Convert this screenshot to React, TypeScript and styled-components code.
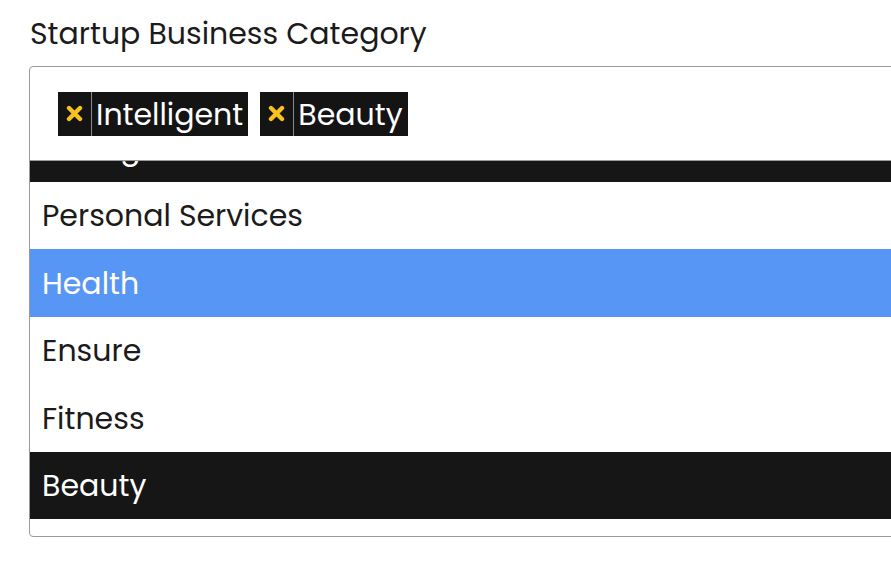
import { useEffect, useRef } from 'react'
import styled, { createGlobalStyle } from 'styled-components'

const GlobalStyle = createGlobalStyle`
  html, body {
    margin: 0;
    padding: 0;
    background: #ffffff;
    overflow: hidden;
  }
  body {
    font-family: 'Poppins', 'Open Sans', 'DejaVu Sans', sans-serif;
    color: #1b1b1b;
  }
`

const Page = styled.div`
  padding: 14px 0 0 29px;
`

const Label = styled.div`
  font-size: 30px;
  line-height: 40px;
  color: #1b1b1b;
  margin-bottom: 12px;
  padding-left: 1px;
`

const SelectBox = styled.div`
  width: 960px;
  border: 1px solid #9a9a9a;
  border-radius: 4px;
  overflow: hidden;
  background: #ffffff;
`

const TagArea = styled.div`
  height: 93px;
  display: flex;
  align-items: center;
  gap: 12px;
  padding-left: 28px;
  border-bottom: 1px solid #9a9a9a;
`

const Tag = styled.div`
  display: flex;
  align-items: stretch;
  height: 44px;
  background: #141414;
  color: #ffffff;
`

const TagRemove = styled.span`
  width: 33px;
  display: flex;
  align-items: center;
  justify-content: center;
  border-right: 1px solid #8a8a8a;
`

const TagText = styled.span`
  display: flex;
  align-items: center;
  padding: 2px 5px 0 4px;
  font-size: 30px;
`

const List = styled.div`
  height: 375px;
  overflow: hidden;
`

const Option = styled.div<{ state?: 'selected' | 'active' }>`
  height: 67.5px;
  display: flex;
  align-items: center;
  padding: 2px 12px 0;
  box-sizing: border-box;
  font-size: 30px;
  background: ${p => p.state === 'selected' ? '#161616' : p.state === 'active' ? '#5796f5' : '#ffffff'};
  color: ${p => p.state ? '#ffffff' : '#1b1b1b'};
`

const ListEnd = styled.div`
  height: 17px;
`

const RemoveIcon = () => (
  <svg width='17' height='17' viewBox='0 0 17 17'>
    <path d='M3 3 L14 14 M14 3 L3 14' stroke='#f7c21b' strokeWidth='4.4' strokeLinecap='round' />
  </svg>
)

const selected = ['Intelligent', 'Beauty']
const options = ['Intelligent', 'Personal Services', 'Health', 'Ensure', 'Fitness', 'Beauty']

function App() {
  const listRef = useRef<HTMLDivElement>(null)

  useEffect(() => {
    if (listRef.current) listRef.current.scrollTop = 49
  }, [])

  return (
    <>
      <GlobalStyle />
      <Page>
        <Label>Startup Business Category</Label>
        <SelectBox>
          <TagArea>
            {selected.map(name => (
              <Tag key={name}>
                <TagRemove><RemoveIcon /></TagRemove>
                <TagText>{name}</TagText>
              </Tag>
            ))}
          </TagArea>
          <List ref={listRef}>
            {options.map(name => (
              <Option
                key={name}
                state={name === 'Health' ? 'active' : selected.includes(name) ? 'selected' : undefined}
              >
                {name}
              </Option>
            ))}
            <ListEnd />
          </List>
        </SelectBox>
      </Page>
    </>
  )
}

export default App
